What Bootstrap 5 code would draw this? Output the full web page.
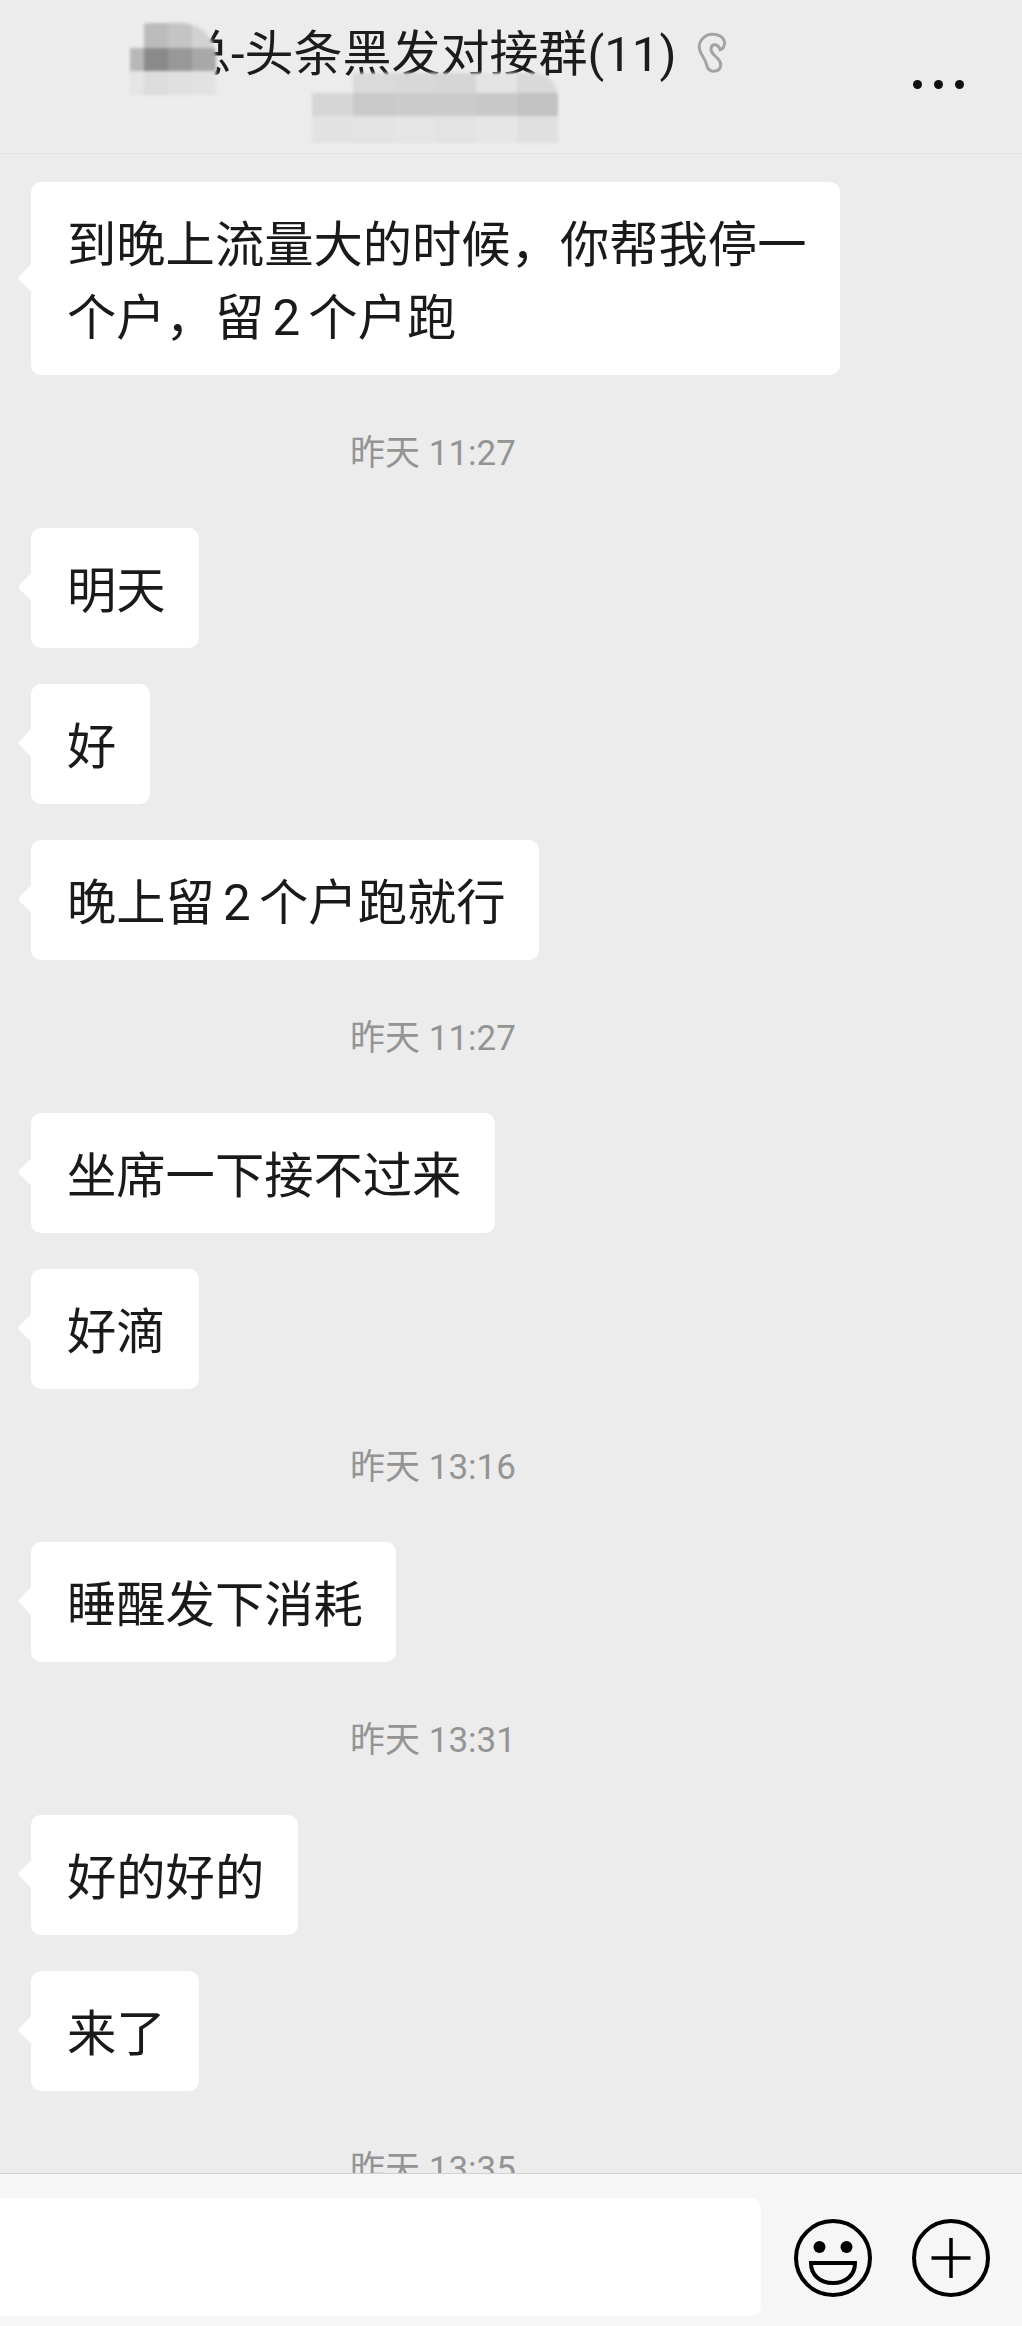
<!DOCTYPE html>
<html lang="zh">
<head>
    <meta charset="UTF-8">
    <title>群聊</title>
    <link href="https://cdn.jsdelivr.net/npm/bootstrap@5.3.0/dist/css/bootstrap.min.css" rel="stylesheet">
    <style>
        html, body { height: 100%; }
        body {
            background: #ececec;
            color: #1a1a1a;
            font-family: Roboto, "Noto Sans CJK SC", sans-serif;
            overflow: hidden;
        }
        .chat-head { height: 154px; border-bottom: 1px solid #e3e3e3; }
        .chat-title { font-size: 49px; line-height: 60px; padding: 25px 0 0 182px; white-space: nowrap; color: #1c1c1c; }
        .ear-icon { width: 32px; height: 43px; margin-left: 20px; vertical-align: -3px; }
        .more-dots { position: absolute; left: 913px; top: 80px; gap: 12px; }
        .more-dots span { width: 9px; height: 9px; background: #111; border-radius: 50%; }
        .mosaic { position: absolute; filter: blur(1.5px); display: grid; overflow: hidden; }
        .mosaic i { display: block; }
        .mosaic-name { left: 130px; top: 23px; grid-template-columns: 14px repeat(3, 24px); grid-template-rows: 25px 23px 24px; border-radius: 20px 34px 0 0; }
        .mosaic-sub { left: 312px; top: 73px; grid-template-columns: repeat(6, 41px); grid-template-rows: 20px 23px 27px; border-radius: 14px 24px 0 0; }
        .chat-body { padding: 28px 0 0 31px; overflow: hidden; }
        .msg {
            position: relative;
            width: fit-content;
            background: #fff;
            border-radius: 10px;
            padding: 27px 33.5px 20px 36px;
            font-size: 49.3px;
            line-height: 73px;
            word-spacing: -4px;
            white-space: nowrap;
            margin-bottom: 36px;
        }
        .msg::before {
            content: "";
            position: absolute;
            left: -9px;
            top: 50%;
            width: 22px;
            height: 22px;
            margin-top: -12px;
            background: #fff;
            border-radius: 3px;
            transform: rotate(45deg);
        }
        .stamp {
            width: 804px;
            text-align: center;
            font-size: 35px;
            line-height: 42px;
            color: #949494;
            margin: 58px 0 53px;
        }
        .chat-foot { height: 153px; background: #f6f6f6; border-top: 1px solid #d2d2d2; padding: 24px 0 10px; }
        .input-box { width: 761px; height: 118px; background: #fff; border-radius: 0 10px 10px 0; }
        .foot-icon { width: 86px; height: 86px; }
        .foot-icons { gap: 32px; margin-left: 29px; margin-top: 17px; }
    </style>
</head>
<body class="d-flex flex-column">
<header class="chat-head position-relative flex-shrink-0">
    <div class="chat-title">总-头条黑发对接群(11)<svg class="ear-icon" viewBox="50 35 95 130" fill="none" stroke="#a3a3a3" stroke-width="9" stroke-linecap="round"><path d="M136 72C134 52 115 43 95 45 70 48 55 70 60 90 63 110 78 116 82 140 85 155 100 160 112 155 125 150 128 135 118 122 108 110 90 100 95 85 98 74 115 72 122 92 128 90 134 84 136 72z"/></svg></div>
    <div class="mosaic mosaic-name">
        <i></i><i style="background:#bcbcbc"></i><i style="background:#c4c4c4"></i><i style="background:#d2d2d2"></i>
        <i style="background:#b8b8b8"></i><i style="background:#8a8a8a"></i><i style="background:#989898"></i><i style="background:#a8a8a8"></i>
        <i style="background:#e5e5e5"></i><i style="background:#dcdcdc"></i><i style="background:#e0e0e0"></i><i style="background:#e2e2e2"></i>
    </div>
    <div class="mosaic mosaic-sub">
        <i></i><i style="background:#dadada"></i><i style="background:#d8d8d8"></i><i style="background:#d6d6d6"></i><i style="background:#e4e4e4"></i><i style="background:#d9d9d9"></i>
        <i style="background:#d6d6d6"></i><i style="background:#c9c9c9"></i><i style="background:#cbcbcb"></i><i style="background:#cccccc"></i><i style="background:#c8c8c8"></i><i style="background:#c2c2c2"></i>
        <i style="background:#e2e2e2"></i><i style="background:#e3e3e3"></i><i style="background:#e5e5e5"></i><i style="background:#e3e3e3"></i><i style="background:#e6e6e6"></i><i style="background:#e0e0e0"></i>
    </div>
    <div class="more-dots d-flex"><span></span><span></span><span></span></div>
</header>

<main class="chat-body flex-grow-1">
    <div class="msg">到晚上流量大的时候，你帮我停一<br>个户，留 2 个户跑</div>
    <div class="stamp">昨天 11:27</div>
    <div class="msg">明天</div>
    <div class="msg">好</div>
    <div class="msg">晚上留 2 个户跑就行</div>
    <div class="stamp">昨天 11:27</div>
    <div class="msg">坐席一下接不过来</div>
    <div class="msg">好滴</div>
    <div class="stamp">昨天 13:16</div>
    <div class="msg">睡醒发下消耗</div>
    <div class="stamp">昨天 13:31</div>
    <div class="msg">好的好的</div>
    <div class="msg">来了</div>
    <div class="stamp">昨天 13:35</div>
</main>

<footer class="chat-foot d-flex flex-shrink-0">
    <div class="input-box"></div>
    <div class="foot-icons d-flex">
        <svg class="foot-icon" viewBox="0 0 86 86" fill="none" stroke="#000" stroke-width="4">
            <circle cx="43" cy="43" r="37"/>
            <circle cx="29.5" cy="32" r="6" fill="#000" stroke="none"/>
            <circle cx="56.5" cy="32" r="6" fill="#000" stroke="none"/>
            <path d="M21 48h44c0 12-9 20-22 20S21 60 21 48z"/>
        </svg>
        <svg class="foot-icon" viewBox="0 0 86 86" fill="none" stroke="#000" stroke-width="4">
            <circle cx="43" cy="43" r="37"/>
            <path d="M43 23v40M23.5 43h39" stroke-width="3.5"/>
        </svg>
    </div>
</footer>
</body>
</html>
